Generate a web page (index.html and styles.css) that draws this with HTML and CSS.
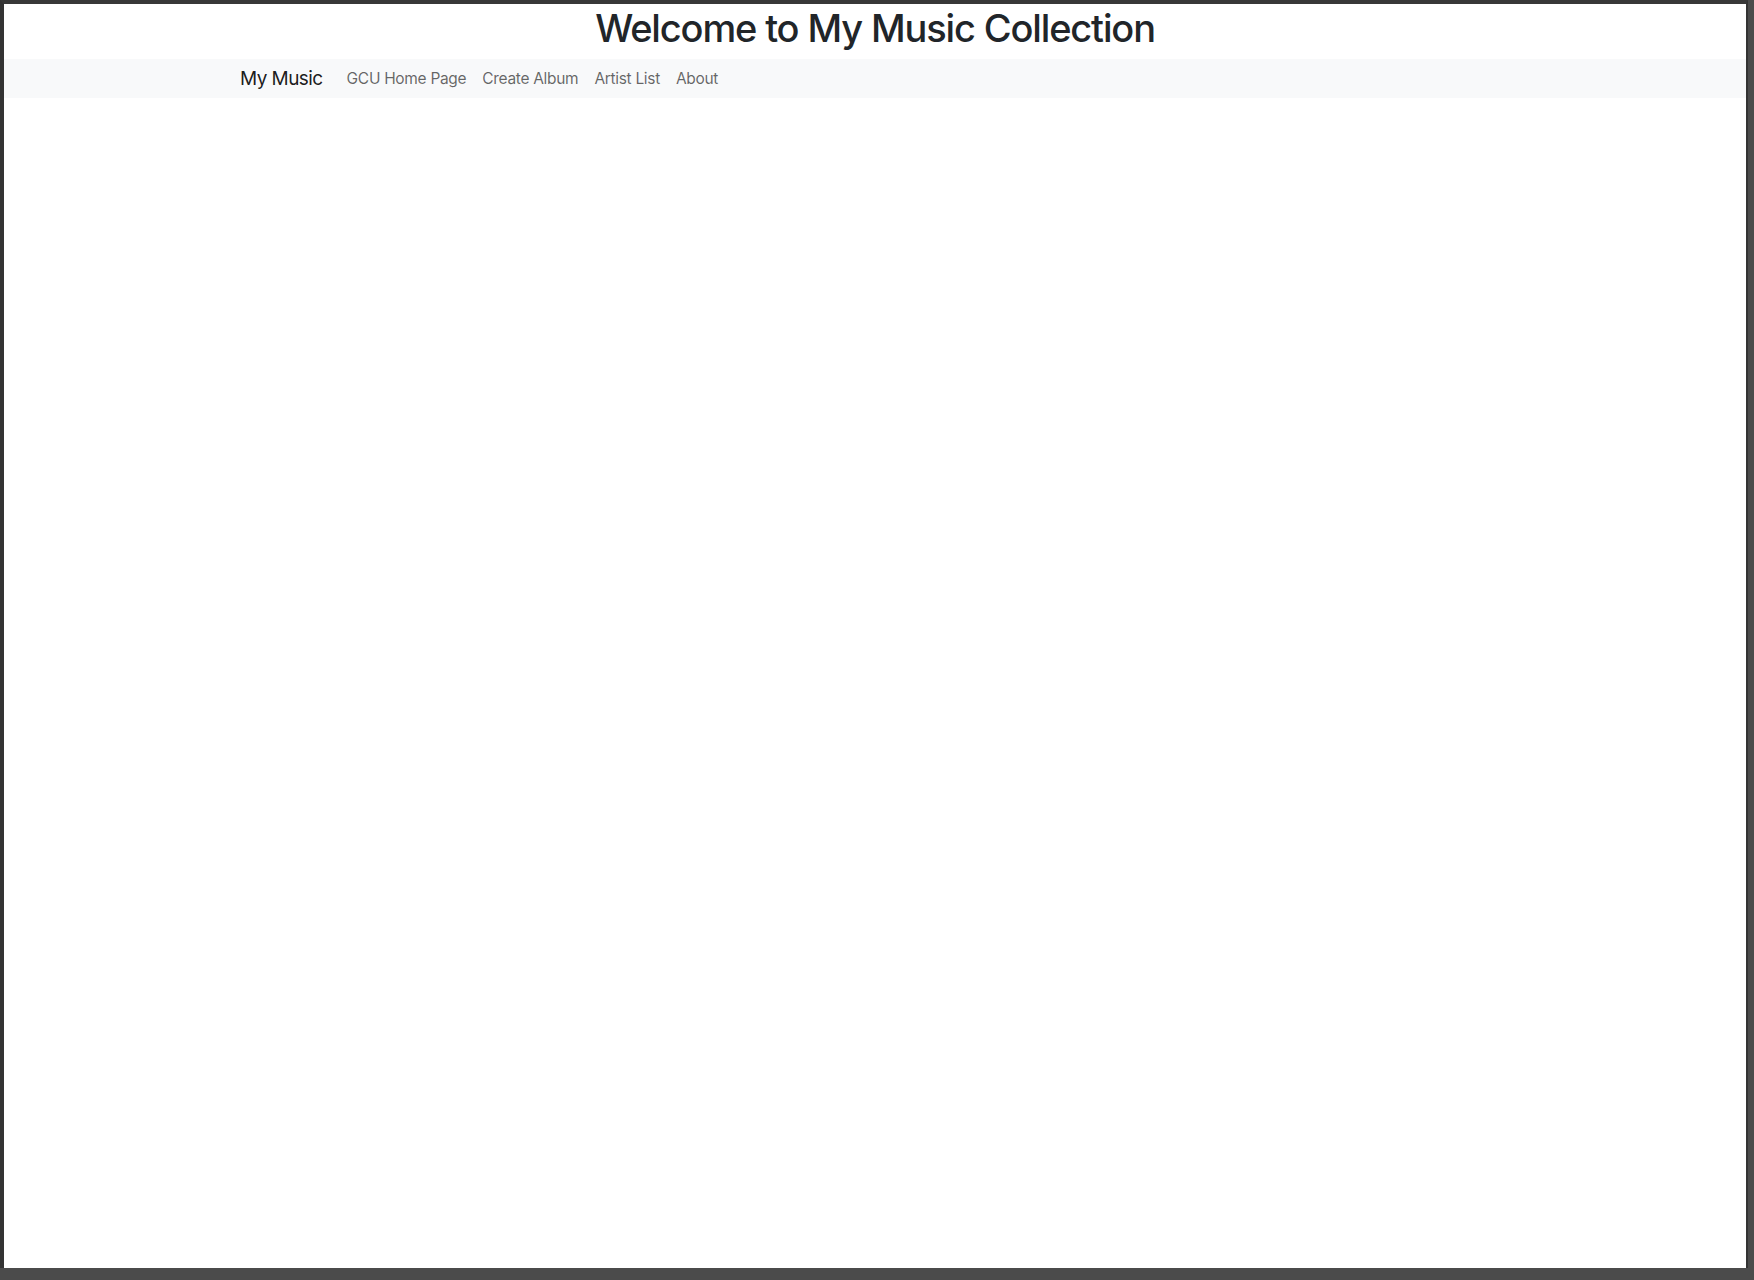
FILE: index.html
```html
<!DOCTYPE html>
<html lang="en">
<head>
<meta charset="utf-8">
<title>My Music</title>
<link rel="stylesheet" href="styles.css">
</head>
<body>
<div class="frame">
  <div class="page">
    <h1 class="title">Welcome to My Music Collection</h1>
    <nav class="navbar">
      <div class="navbar-inner">
        <a class="brand" href="#">My Music</a>
        <ul class="nav">
          <li><a class="nav-link" href="#">GCU Home Page</a></li>
          <li><a class="nav-link" href="#">Create Album</a></li>
          <li><a class="nav-link" href="#">Artist List</a></li>
          <li><a class="nav-link" href="#">About</a></li>
        </ul>
      </div>
    </nav>
  </div>
</div>
</body>
</html>
```

FILE: styles.css
```css
html, body {
  margin: 0;
  padding: 0;
}
body {
  background: #4b4b4b;
  padding: 0 6px 12px 0;
  font-family: Inter, "Noto Sans", "Liberation Sans", sans-serif;
}
.frame {
  border-left: 4px solid #333333;
  border-top: 4px solid #383838;
  border-right: 2px solid #333333;
}
.page {
  background: #ffffff;
  height: 1264px;
  display: flex;
  flex-direction: column;
}
.title {
  margin: 0 0 7px 0;
  text-align: center;
  font-size: 38px;
  letter-spacing: -0.03em;
  line-height: 48px;
  font-weight: 500;
  color: #212529;
}
.navbar {
  background: #f8f9fa;
  height: 39px;
  display: flex;
  align-items: center;
}
.navbar-inner {
  display: flex;
  align-items: center;
  padding-left: 236px;
}
.brand {
  font-size: 19px;
  letter-spacing: -0.03em;
  color: rgba(0, 0, 0, 0.9);
  text-decoration: none;
  margin-right: 16px;
}
.nav {
  display: flex;
  list-style: none;
  margin: 0;
  padding: 0;
}
.nav-link {
  display: block;
  padding: 0 8px;
  font-size: 15.5px;
  letter-spacing: -0.02em;
  color: rgba(0, 0, 0, 0.6);
  text-decoration: none;
}
```
